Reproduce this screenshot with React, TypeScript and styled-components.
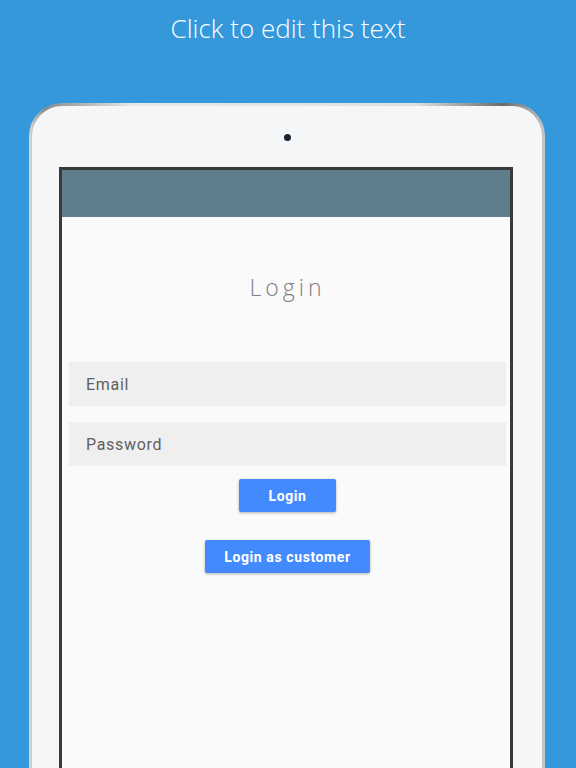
import React from "react";
import styled, { createGlobalStyle } from "styled-components";

const Global = createGlobalStyle`
  html, body { margin: 0; padding: 0; }
  body { background: #3598db; overflow: hidden; }
`;

const Page = styled.div`
  width: 576px;
  height: 768px;
  overflow: hidden;
  background: #3598db;
  display: flex;
  flex-direction: column;
`;

const Headline = styled.h1`
  margin: 0;
  height: 56px;
  line-height: 56px;
  text-align: center;
  font-family: "Open Sans", sans-serif;
  font-weight: 300;
  font-size: 26px;
  color: #ffffff;
  margin-bottom: 47px;
`;

const DeviceEdge = styled.div`
  margin-left: 29px;
  width: 516px;
  flex: 1;
  padding: 3px 3px 0 3px;
  border-radius: 33px 33px 0 0;
  background: linear-gradient(90deg, #d8d8d8 0%, #8a8a8a 3%, #e8e8e8 20%, #e0e0e0 75%, #6a6a6a 92%, #c8c8c8 100%);
  box-sizing: border-box;
  display: flex;
`;

const Bezel = styled.div`
  flex: 1;
  background: #f5f6f8;
  border-radius: 30px 30px 0 0;
  display: flex;
  flex-direction: column;
  align-items: stretch;
  padding: 28px 29px 0 27px;
`;

const Camera = styled.div`
  width: 7px;
  height: 7px;
  border-radius: 50%;
  background: #1c2233;
  align-self: center;
  margin-left: 2px;
  margin-bottom: 26px;
`;

const Screen = styled.div`
  flex: 1;
  border: 3px solid #3a3a3a;
  border-bottom: none;
  background: #fafafa;
  display: flex;
  flex-direction: column;
`;

const AppBar = styled.div`
  height: 47px;
  background: #607d8b;
`;

const Content = styled.div`
  display: flex;
  flex-direction: column;
  align-items: center;
  padding: 0 4px 0 7px;
`;

const Title = styled.div`
  margin-top: 55px;
  height: 30px;
  line-height: 30px;
  font-family: "Open Sans", sans-serif;
  font-weight: 300;
  font-size: 23px;
  letter-spacing: 4px;
  color: #808080;
  margin-bottom: 60px;
`;

const Field = styled.input<{ $gap: number }>`
  box-sizing: border-box;
  width: 100%;
  height: 44px;
  border: none;
  outline: none;
  background: #efefef;
  padding: 0 17px;
  font-family: Roboto, sans-serif;
  font-size: 16px;
  color: #555;
  letter-spacing: 0.7px;
  margin-bottom: ${(p) => p.$gap}px;
  &::placeholder { color: #5f5f5f; }
`;

const Button = styled.button<{ $width: number; $gap: number }>`
  width: ${(p) => p.$width}px;
  height: 33px;
  padding: 0;
  border: none;
  border-radius: 2px;
  background: #448aff;
  color: #fff;
  font-family: Roboto, sans-serif;
  font-weight: 700;
  font-size: 14px;
  letter-spacing: 0.6px;
  box-shadow: 0 1px 3px rgba(0, 0, 0, 0.3);
  margin-bottom: ${(p) => p.$gap}px;
  cursor: pointer;
`;

export default function App() {
  return (
    <>
      <Global />
      <Page>
        <Headline>Click to edit this text</Headline>
        <DeviceEdge>
          <Bezel>
            <Camera />
            <Screen>
              <AppBar />
              <Content>
                <Title>Login</Title>
                <Field $gap={16} placeholder="Email" />
                <Field $gap={13} type="password" placeholder="Password" />
                <Button $width={97} $gap={28}>Login</Button>
                <Button $width={165} $gap={0}>Login as customer</Button>
              </Content>
            </Screen>
          </Bezel>
        </DeviceEdge>
      </Page>
    </>
  );
}
